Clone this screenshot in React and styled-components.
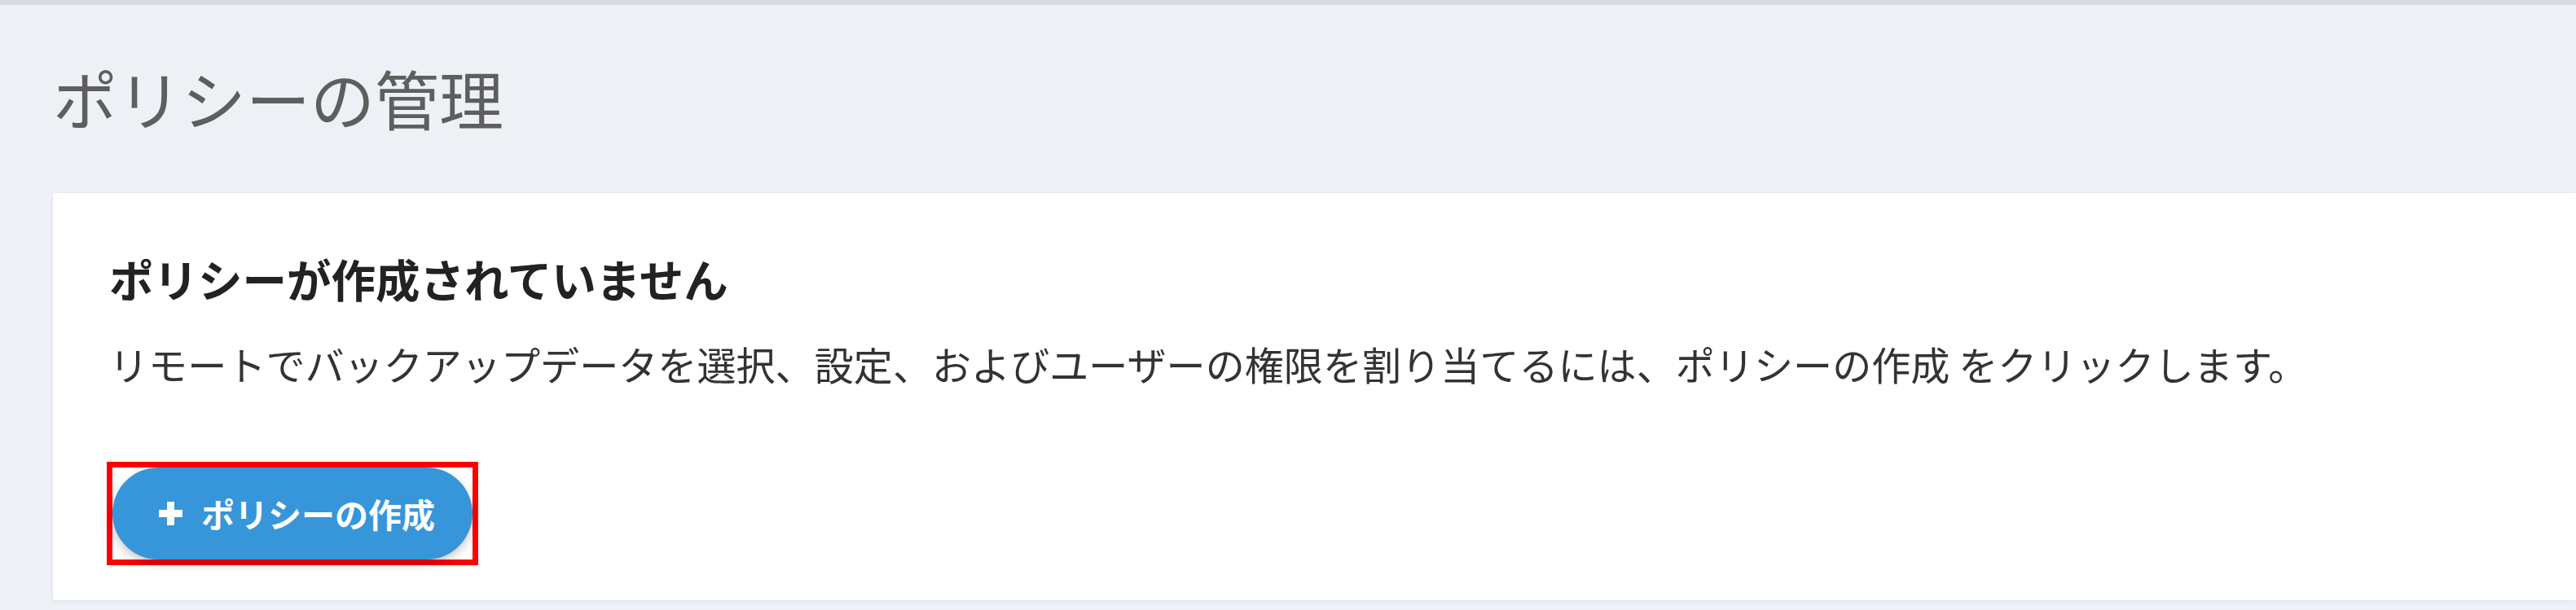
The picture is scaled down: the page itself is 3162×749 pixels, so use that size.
import React from 'react';
import styled, { createGlobalStyle } from 'styled-components';

const GlobalStyle = createGlobalStyle`
    html, body {
        margin: 0;
        padding: 0;
        background-color: #edf0f5;
        overflow: hidden;
    }
    body {
        font-family: 'Noto Sans CJK JP', 'Noto Sans', sans-serif;
    }
`

const Page = styled.div`
    width: 3162px;
    height: 749px;
    background-color: #edf0f5;
    display: flex;
    flex-direction: column;
    border-top: 6px solid #d8dadf;
    box-sizing: border-box;
`

const Content = styled.main`
    display: flex;
    flex-direction: column;
    padding-left: 65px;
`

const PageTitle = styled.h1`
    margin: 74px 0 0;
    font-size: 79px;
    line-height: 1;
    font-weight: 400;
    color: #5e5e5e;
`

const Card = styled.section`
    margin-top: 78px;
    height: 500px;
    background-color: #fff;
    border-radius: 4px 0 0 4px;
    box-shadow: 0 1px 4px rgba(40, 50, 70, 0.08);
    padding: 78px 0 0 69px;
    box-sizing: border-box;
    display: flex;
    flex-direction: column;
    align-items: flex-start;
`

const Heading = styled.h2`
    margin: 0;
    font-size: 54.5px;
    line-height: 1;
    font-weight: 700;
    color: #222;
`

const Description = styled.p`
    margin: 52px 0 0;
    font-size: 48.1px;
    line-height: 1;
    color: #333;
    white-space: nowrap;
`

/* red annotation box drawn round the button in the screenshot */
const HighlightFrame = styled.div`
    margin: 97px 0 0 -3px;
    border: 7px solid #ff0000;
    display: flex;
`

const CreateButton = styled.button`
    height: 113px;
    padding: 0 46px 0 54px;
    display: flex;
    align-items: center;
    gap: 20px;
    border: none;
    border-radius: 57px;
    background-color: #3796da;
    color: #fff;
    font-family: 'Noto Sans CJK JP', 'Noto Sans', sans-serif;
    font-size: 41px;
    font-weight: 700;
    line-height: 1;
    cursor: pointer;
    box-shadow: 0 5px 12px rgba(0, 0, 0, 0.22);
    svg {
        flex-shrink: 0;
    }
`

const PlusIcon = () => (
    <svg width="35" height="35" viewBox="0 0 35 35">
        <path d="M17.5 3 V32 M3 17.5 H32" stroke="#fff" strokeWidth="9" />
    </svg>
)

const App = () => {
    return (
        <>
            <GlobalStyle />
            <Page>
                <Content>
                    <PageTitle>ポリシーの管理</PageTitle>
                    <Card>
                        <Heading>ポリシーが作成されていません</Heading>
                        <Description>
                            リモートでバックアップデータを選択、設定、およびユーザーの権限を割り当てるには、ポリシーの作成 をクリックします。
                        </Description>
                        <HighlightFrame>
                            <CreateButton type="button">
                                <PlusIcon />
                                ポリシーの作成
                            </CreateButton>
                        </HighlightFrame>
                    </Card>
                </Content>
            </Page>
        </>
    )
}

export default App;
